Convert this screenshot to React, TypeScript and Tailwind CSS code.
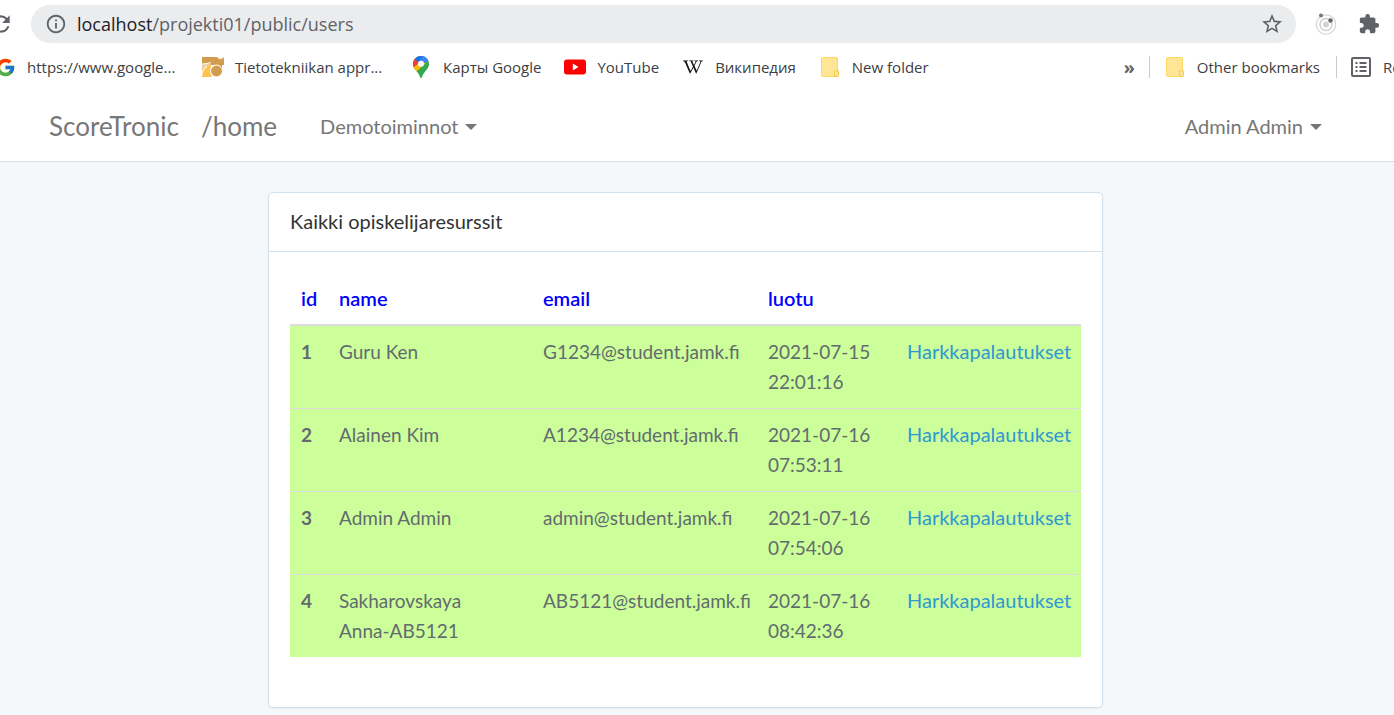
import type { ReactNode } from "react";
import { FcGoogle } from "react-icons/fc";
import { FaWikipediaW } from "react-icons/fa";
import { MdExtension, MdInfoOutline, MdRefresh, MdStarBorder } from "react-icons/md";

type User = { id: number; name: string; email: string; date: string; time: string };

const users: User[] = [
  { id: 1, name: "Guru Ken", email: "G1234@student.jamk.fi", date: "2021-07-15", time: "22:01:16" },
  { id: 2, name: "Alainen Kim", email: "A1234@student.jamk.fi", date: "2021-07-16", time: "07:53:11" },
  { id: 3, name: "Admin Admin", email: "admin@student.jamk.fi", date: "2021-07-16", time: "07:54:06" },
  { id: 4, name: "Sakharovskaya Anna-AB5121", email: "AB5121@student.jamk.fi", date: "2021-07-16", time: "08:42:36" },
];

function FolderIcon() {
  return (
    <svg width="18" height="20" viewBox="0 0 18 20" aria-hidden="true">
      <path d="M2 .5h13q1.500 0 1.500 1.500v11.500h.8v5q0 1-1 1H2Q.5 19.500.5 18V2Q.5.5 2 .5Z" fill="#ffe596" stroke="#fdd864" />
      <path d="M13.500 19.500v-5q0-.8.8-.8h2.200q.8 0 .8.8v4q0 1-1 1Z" fill="#ffe596" stroke="#f7c948" />
    </svg>
  );
}

function MapsIcon() {
  return (
    <svg width="16" height="22" viewBox="0 0 16 22" aria-hidden="true">
      <defs>
        <clipPath id="pin">
          <path d="M8 0C3.500 0 0 3.500 0 7.900c0 2.600 1.200 4.400 3 6.600 2 2.400 3.300 4.100 4 6.600.3 1.200 1.700 1.200 2 0 .7-2.500 2-4.200 4-6.600 1.800-2.200 3-4 3-6.600C16 3.500 12.500 0 8 0Z" />
        </clipPath>
      </defs>
      <g clipPath="url(#pin)">
        <path d="M0 0h16v22H0Z" fill="#34a853" />
        <path d="M0 11 6 5 13 7 3 16Z" fill="#fbbc04" />
        <path d="M0 3 2 2.500 6.500 6.400 0 12Z" fill="#ea4335" />
        <path d="M1.500 3 5 0h5.500L8 8Z" fill="#1a73e8" />
        <path d="M10 0h3.500L16 5 9 8 7 4Z" fill="#4285f4" />
      </g>
      <circle cx="8" cy="7.800" r="3" fill="#fff" />
    </svg>
  );
}

function YoutubeIcon() {
  return (
    <svg width="22" height="16" viewBox="0 0 22 16" aria-hidden="true">
      <rect y=".5" width="22" height="15" rx="3" fill="#f00" />
      <path d="M8.800 4.600v6.800l5.700-3.400Z" fill="#fff" />
    </svg>
  );
}

function OwlIcon() {
  return (
    <svg width="22" height="20" viewBox="0 0 22 20" aria-hidden="true">
      <path d="M0 0h22v8H0Z" fill="#d19c4d" />
      <path d="M15 0h7q-1 2-5 2Z" fill="#fff8e9" />
      <path d="M0 7h9L5 12 0 18Z" fill="#e8cc9c" />
      <path d="M0 20q1-8 4-10 2-2 5-2-1 8 1 12Z" fill="#ffc34d" />
      <path d="M0 7q5 0 9-1.500M5 9Q1 12 0 17" fill="none" stroke="#fff8e9" strokeWidth="1.200" />
      <circle cx="14.500" cy="14" r="6" fill="#d19c4d" stroke="#fff8e9" strokeWidth="1.200" />
      <path d="M17 8q2 1 3 4V7h-3Z" fill="#d19c4d" />
    </svg>
  );
}

function OrbitIcon() {
  return (
    <svg width="22" height="22" viewBox="0 0 22 22" fill="none" aria-hidden="true">
      <circle cx="11" cy="11.500" r="9.700" stroke="#d7d7d7" strokeWidth="1.300" />
      <circle cx="11" cy="11.500" r="6" stroke="#cfcfcf" strokeWidth="1.500" />
      <circle cx="11" cy="11.500" r="3" fill="#d3d3d3" />
      <circle cx="6" cy="2.500" r="2" fill="#777" />
      <circle cx="15.500" cy="7.500" r="2.200" fill="#666" />
    </svg>
  );
}

function ReadingListIcon() {
  return (
    <svg width="20" height="20" viewBox="0 0 20 20" fill="none" aria-hidden="true">
      <rect x="1" y="1" width="18" height="18" rx="1" stroke="#5f6368" strokeWidth="2" />
      <path d="M4.500 6h2M4.500 10h2M4.500 14h2M8.500 6h7M8.500 10h7M8.500 14h7" stroke="#5f6368" strokeWidth="1.800" />
    </svg>
  );
}

function Bookmark({ icon, label, wide = false }: { icon: ReactNode; label: string; wide?: boolean }) {
  return (
    <a href="#" className="flex shrink-0 items-center gap-[11px] whitespace-nowrap">
      <span className="flex w-[22px] justify-center">{icon}</span>
      <span className={wide ? "min-w-[152px]" : undefined}>{label}</span>
    </a>
  );
}

function Caret() {
  return <span className="mt-0.5 border-x-[6px] border-t-[6px] border-x-transparent border-t-[#777]" />;
}

function BrowserBar() {
  return (
    <div className="overflow-hidden font-['Open_Sans','Noto_Sans',sans-serif] text-[#3c4043]">
      <div className="flex h-12 items-center">
        <button aria-label="Reload" className="-ml-3 mr-[17px] text-[#5f6368]">
          <MdRefresh size={26} />
        </button>
        <div className="flex h-[38px] grow items-center rounded-full bg-[#ebecee] px-3.5">
          <MdInfoOutline size={22} className="mr-2.5 shrink-0 text-[#5f6368]" />
          <div className="min-w-0 grow truncate text-[18px] text-[#5f6368]">
            <span className="text-[#202124]">localhost</span>/projekti01/public/users
          </div>
          <button aria-label="Bookmark this page" className="-mr-0.5 text-[#5f6368]">
            <MdStarBorder size={24} />
          </button>
        </div>
        <button aria-label="Orbit extension" className="ml-[19px]">
          <OrbitIcon />
        </button>
        <button aria-label="Extensions" className="mr-3.5 ml-[21px] text-[#5f6368]">
          <MdExtension size={22} />
        </button>
      </div>
      <nav aria-label="Bookmarks" className="flex h-10 items-center pb-0.5 text-[15px]">
        <div className="-ml-1.5 flex grow items-center gap-[23px]">
          <Bookmark icon={<FcGoogle size={21} />} label="https://www.google..." wide />
          <Bookmark icon={<OwlIcon />} label="Tietotekniikan appr..." wide />
          <Bookmark icon={<MapsIcon />} label="Карты Google" />
          <Bookmark icon={<YoutubeIcon />} label="YouTube" />
          <Bookmark icon={<FaWikipediaW size={20} color="#111" />} label="Википедия" />
          <Bookmark icon={<FolderIcon />} label="New folder" />
        </div>
        <button aria-label="More bookmarks" className="mr-3.5 text-[18px] font-bold text-[#5f6368]">
          »
        </button>
        <div className="flex h-[22px] items-center border-l border-[#c8cacd] pr-4 pl-3.5">
          <Bookmark icon={<FolderIcon />} label="Other bookmarks" />
        </div>
        <div className="flex h-[22px] w-[58px] items-center overflow-hidden border-l border-[#c8cacd] pl-[13px]">
          <Bookmark icon={<ReadingListIcon />} label="Reading list" />
        </div>
      </nav>
    </div>
  );
}

export default function App() {
  return (
    <div className="min-h-screen overflow-x-hidden bg-[#f4f8fb] font-[Lato,sans-serif] text-[19px] leading-[30px] text-[#636b6f]">
      <header className="bg-white">
        <BrowserBar />
        <nav className="flex h-[74px] items-center border-b border-[#d3e0e9] pt-0.5 pr-[72px] pl-[49px] text-[20px] text-[#777]">
          <a href="#" className="mr-[22px] text-[26px]">ScoreTronic</a>
          <a href="#" className="mr-[43px] text-[26px]">/home</a>
          <button className="flex items-center gap-[7px]">
            Demotoiminnot <Caret />
          </button>
          <button className="ml-auto flex items-center gap-[7px]">
            Admin Admin <Caret />
          </button>
        </nav>
      </header>
      <main className="pt-[30px] pr-[23px] pb-[7px]">
        <section className="mx-auto w-full max-w-[835px] rounded-[5px] border border-[#d3e0e9] bg-white shadow-xs">
          <h1 className="border-b border-[#d3e0e9] px-[21px] pt-[13px] pb-[15px] text-[20px] leading-[30px] text-[#333]">
            Kaikki opiskelijaresurssit
          </h1>
          <div className="px-[21px] pt-5 pb-[50px]">
            <table className="w-full table-fixed text-left">
              <colgroup>
                <col className="w-[38px]" />
                <col className="w-[204px]" />
                <col className="w-[225px]" />
                <col className="w-[139px]" />
                <col />
              </colgroup>
              <thead className="border-b-2 border-[#ddd] text-[20px] text-[#00f]">
                <tr className="h-[53px]">
                  <th scope="col" className="pl-[11px] font-semibold">id</th>
                  <th scope="col" className="px-[11px] font-semibold">name</th>
                  <th scope="col" className="px-[11px] font-semibold">email</th>
                  <th scope="col" className="px-[11px] font-semibold">luotu</th>
                  <td />
                </tr>
              </thead>
              <tbody className="divide-y divide-[#ddd] bg-[#cf9]">
                {users.map((user) => (
                  <tr key={user.id} className="align-top">
                    <th scope="row" className="py-[11px] pl-[11px] font-bold">{user.id}</th>
                    <td className="py-[11px] pr-10 pl-[11px]">{user.name}</td>
                    <td className="p-[11px] whitespace-nowrap">{user.email}</td>
                    <td className="p-[11px]">
                      {user.date} {user.time}
                    </td>
                    <td className="px-[11px] py-2.5 text-[20px] leading-[30px] whitespace-nowrap">
                      <a href="#" className="text-[#3097d1]">Harkkapalautukset</a>
                    </td>
                  </tr>
                ))}
              </tbody>
            </table>
          </div>
        </section>
      </main>
    </div>
  );
}
